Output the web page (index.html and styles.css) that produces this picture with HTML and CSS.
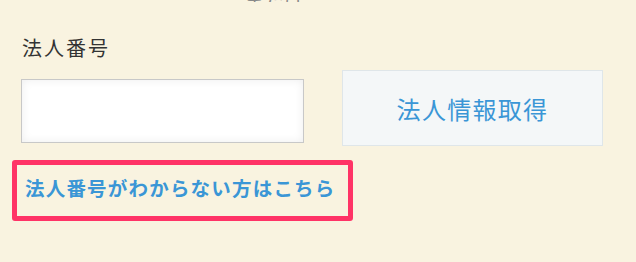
FILE: index.html
```html
<!DOCTYPE html>
<html lang="ja">
<head>
<meta charset="utf-8">
<link rel="stylesheet" href="styles.css">
</head>
<body>
<div class="page">
  <div class="cut">または</div>
  <div class="label">法人番号</div>
  <div class="row">
    <input class="field" type="text">
    <button class="btn">法人情報取得</button>
  </div>
  <a class="help" href="#">法人番号がわからない方はこちら</a>
</div>
</body>
</html>
```
FILE: styles.css
```css
html, body {
  margin: 0;
  padding: 0;
  background: #f9f3e0;
}
body {
  font-family: "Noto Sans CJK JP", "Noto Sans", sans-serif;
  width: 636px;
  height: 262px;
  overflow: hidden;
}
.page {
  padding: 0 0 0 12px;
  display: flex;
  flex-direction: column;
  align-items: flex-start;
}
.cut {
  height: 2px;
  margin-left: 232px;
  font-size: 20px;
  line-height: 2px;
  color: #888;
  overflow: hidden;
  display: flex;
  align-items: flex-end;
}
.label {
  margin-top: 31px;
  margin-left: 10px;
  font-size: 20px;
  letter-spacing: 2px;
  line-height: 30px;
  color: #333;
}
.row {
  display: flex;
  align-items: flex-start;
  margin-top: 7px;
  margin-left: 9px;
}
.field {
  box-sizing: border-box;
  width: 283px;
  height: 64px;
  margin-top: 9px;
  border: 1px solid #c8c8c8;
  background: #fff;
  box-shadow: inset 0 0 10px rgba(0,0,0,0.07);
  outline: none;
  padding: 0;
}
.btn {
  box-sizing: border-box;
  width: 261px;
  height: 76px;
  margin-left: 38px;
  border: 1px solid #dfe6e9;
  background: #f4f7f8;
  color: #3a96d6;
  font-family: "Noto Sans CJK JP", "Noto Sans", sans-serif;
  font-size: 24px;
  letter-spacing: 1.3px;
  padding: 0;
  cursor: pointer;
}
.help {
  box-sizing: border-box;
  margin-top: 14px;
  width: 341px;
  height: 61px;
  border: 5px solid #ff3366;
  border-radius: 3px;
  padding: 8px 0 0 8px;
  font-size: 19.5px;
  font-weight: bold;
  line-height: 30px;
  color: #3a96d6;
  text-decoration: none;
  letter-spacing: 1.2px;
}
```
